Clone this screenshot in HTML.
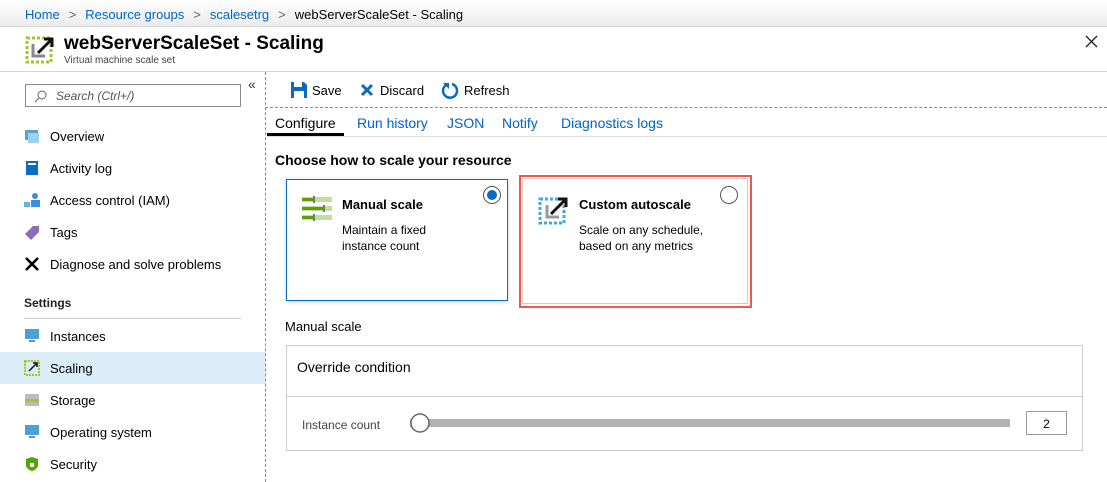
<!DOCTYPE html>
<html><head><style>
*{box-sizing:border-box;margin:0;padding:0}
body{width:1107px;height:482px;overflow:hidden;background:#fff;font-family:"Liberation Sans",sans-serif;color:#000;position:relative;font-size:13px}
.a{position:absolute}
.blue{color:#0063c9}
.crumb{top:0;left:0;width:1107px;height:27px;background:linear-gradient(#fff,#ececec);border-bottom:1px solid #d6d6d6}
.side div.i{position:absolute;left:50px;font-size:13px}
.ic{position:absolute;left:24px;width:16px;height:16px}
</style></head><body>
<div class="a crumb"></div>
<div class="a" style="top:7px;left:25px;font-size:13px"><span class="blue">Home</span><span style="color:#666;margin:0 9px">&gt;</span><span class="blue">Resource groups</span><span style="color:#666;margin:0 9px">&gt;</span><span class="blue">scalesetrg</span><span style="color:#666;margin:0 9px">&gt;</span>webServerScaleSet - Scaling</div>
<svg class="a" style="left:25px;top:34px" width="30" height="30"><rect x="2" y="4" width="24" height="24" fill="none" stroke="#a4c628" stroke-width="3" stroke-dasharray="3 2"/><path d="M8 10v12h12" fill="none" stroke="#888" stroke-width="3"/><path d="M13 19L26 6M19 5h8v8" fill="none" stroke="#111" stroke-width="3"/></svg>
<div class="a" style="left:64px;top:33px;font-size:19px;font-weight:bold">webServerScaleSet - Scaling</div>
<div class="a" style="left:64px;top:55px;font-size:10px;color:#444">Virtual machine scale set</div>
<svg class="a" style="left:1085px;top:35px" width="13" height="13"><path d="M1 1L12 12M12 1L1 12" stroke="#222" stroke-width="1.3"/></svg>
<div class="a" style="top:71px;left:0;width:1107px;border-top:1px solid #d6d6d6"></div>
<div class="a" style="top:72px;left:265px;height:410px;border-left:1px dashed #2ea9df"></div>
<div class="a" style="top:76px;left:248px;font-size:14px;color:#333">«</div>
<div class="a" style="left:25px;top:84px;width:216px;height:23px;border:1px solid #8a8a8a;font-size:12px;font-style:italic;color:#555;padding:4px 0 0 30px">Search (Ctrl+/)<svg class="a" style="left:8px;top:5px" width="13" height="13"><circle cx="8" cy="5" r="4" fill="none" stroke="#666"/><path d="M5 8L1 12" stroke="#666"/></svg></div>
<div class="side">
<svg class="ic" style="top:128px"><rect x="1" y="2" width="13" height="10" fill="#5ea0c8"/><rect x="4" y="5" width="11" height="10" fill="#9bd0ee"/></svg><div class="i" style="top:129px">Overview</div>
<svg class="ic" style="top:160px"><rect x="2" y="1" width="12" height="14" fill="#0a69c3"/><rect x="4" y="3" width="8" height="2" fill="#fff"/></svg><div class="i" style="top:161px">Activity log</div>
<svg class="ic" style="top:192px"><circle cx="11" cy="4" r="3" fill="#3a8fd6"/><rect x="7" y="8" width="9" height="7" fill="#3a8fd6"/><rect x="0" y="10" width="6" height="5" fill="#5fb3e6"/></svg><div class="i" style="top:193px">Access control (IAM)</div>
<svg class="ic" style="top:224px"><path d="M1 10L9 2h6v6l-8 8z" fill="#8e6bbf"/></svg><div class="i" style="top:225px">Tags</div>
<svg class="ic" style="top:256px"><path d="M2 2L14 14M14 2L2 14" stroke="#000" stroke-width="2.5"/></svg><div class="i" style="top:257px">Diagnose and solve problems</div>
<div class="a" style="left:24px;top:296px;font-size:12px;font-weight:bold;color:#222">Settings</div>
<div class="a" style="left:24px;top:318px;width:217px;border-top:1px solid #ccc"></div>
<svg class="ic" style="top:328px"><rect x="1" y="1" width="14" height="10" fill="#4aa3d8"/><rect x="5" y="12" width="6" height="2" fill="#888"/></svg><div class="i" style="top:329px">Instances</div>
<div class="a" style="left:0;top:352px;width:265px;height:32px;background:#dcedfa"></div>
<svg class="ic" style="top:360px"><rect x="1" y="1" width="14" height="14" fill="none" stroke="#a4c628" stroke-width="2" stroke-dasharray="2 1"/><path d="M5 11L13 3M9 3h4v4" stroke="#111" fill="none" stroke-width="1.5"/></svg><div class="i" style="top:361px">Scaling</div>
<svg class="ic" style="top:392px"><rect x="1" y="2" width="14" height="12" fill="#bbb"/><rect x="1" y="7" width="14" height="3" fill="#a4c628"/></svg><div class="i" style="top:393px">Storage</div>
<svg class="ic" style="top:424px"><rect x="1" y="1" width="14" height="10" fill="#4aa3d8"/><rect x="5" y="12" width="6" height="2" fill="#888"/></svg><div class="i" style="top:425px">Operating system</div>
<svg class="ic" style="top:456px"><path d="M8 1l6 2v6c0 3-3 5-6 6-3-1-6-3-6-6V3z" fill="#57a300"/><rect x="6" y="7" width="4" height="4" fill="#fff"/></svg><div class="i" style="top:457px">Security</div>
</div>
<svg class="a" style="left:290px;top:81px" width="18" height="18"><path d="M1 1h13l3 3v13H1z" fill="#0a69c3"/><rect x="4" y="1" width="8" height="5" fill="#fff"/><rect x="4" y="10" width="10" height="7" fill="#fff"/></svg>
<div class="a" style="left:312px;top:83px">Save</div>
<svg class="a" style="left:360px;top:83px" width="14" height="14"><path d="M2 2L12 12M12 2L2 12" stroke="#0a69c3" stroke-width="3"/></svg>
<div class="a" style="left:380px;top:83px">Discard</div>
<svg class="a" style="left:441px;top:81px" width="18" height="18"><path d="M5 4A7 7 0 1 0 11 3" fill="none" stroke="#0a69c3" stroke-width="2.5"/><path d="M2 2h6v6z" fill="#0a69c3"/></svg>
<div class="a" style="left:464px;top:83px">Refresh</div>
<div class="a" style="top:107px;left:265px;width:842px;border-top:1px dashed #2ea9df"></div>
<div class="a" style="left:275px;top:115px;font-size:14px">Configure</div>
<div class="a" style="left:267px;top:133px;width:77px;height:3px;background:#000"></div>
<div class="a" style="left:267px;top:136px;width:840px;border-top:1px solid #ddd"></div>
<div class="a blue" style="left:357px;top:115px;font-size:14px">Run history</div>
<div class="a blue" style="left:447px;top:115px;font-size:14px">JSON</div>
<div class="a blue" style="left:502px;top:115px;font-size:14px">Notify</div>
<div class="a blue" style="left:561px;top:115px;font-size:14px">Diagnostics logs</div>
<div class="a" style="left:275px;top:152px;font-size:14px;font-weight:bold">Choose how to scale your resource</div>
<div class="a" style="left:286px;top:179px;width:222px;height:122px;border:1px solid #0a69c3;box-shadow:0 1px 4px rgba(0,0,0,.2)"></div>
<svg class="a" style="left:302px;top:195px" width="30" height="30"><g fill="#bfe09a"><rect y="2" width="30" height="5"/><rect y="11" width="30" height="5"/><rect y="20" width="30" height="5"/></g><g fill="#5aa000"><rect y="3" width="12" height="3"/><rect y="12" width="22" height="3"/><rect y="21" width="12" height="3"/></g><g fill="#777"><rect x="11" y="1" width="2" height="7"/><rect x="21" y="10" width="2" height="7"/><rect x="11" y="19" width="2" height="7"/></g></svg>
<div class="a" style="left:342px;top:197px;font-weight:bold">Manual scale</div>
<div class="a" style="left:342px;top:222px;font-size:12px;line-height:16px">Maintain a fixed<br>instance count</div>
<svg class="a" style="left:482px;top:185px" width="20" height="20"><circle cx="10" cy="10" r="8.5" fill="#fff" stroke="#555"/><circle cx="10" cy="10" r="5" fill="#0a69c3"/></svg>
<div class="a" style="left:519px;top:175px;width:233px;height:133px;border:2px solid #f0574c"></div>
<div class="a" style="left:522px;top:178px;width:226px;height:126px;border:1px solid #ccc"></div>
<svg class="a" style="left:538px;top:193px" width="32" height="32"><rect x="2" y="6" width="24" height="24" fill="none" stroke="#40a9dc" stroke-width="3" stroke-dasharray="3 2"/><path d="M9 12v12h12" fill="none" stroke="#999" stroke-width="3"/><path d="M13 21L27 7M20 6h8v8" fill="none" stroke="#111" stroke-width="3"/></svg>
<div class="a" style="left:579px;top:197px;font-weight:bold">Custom autoscale</div>
<div class="a" style="left:579px;top:222px;font-size:12px;line-height:16px">Scale on any schedule,<br>based on any metrics</div>
<svg class="a" style="left:719px;top:185px" width="20" height="20"><circle cx="10" cy="10" r="8.5" fill="#fff" stroke="#555"/></svg>
<div class="a" style="left:285px;top:319px">Manual scale</div>
<div class="a" style="left:286px;top:345px;width:797px;height:106px;border:1px solid #ccc"></div>
<div class="a" style="left:286px;top:396px;width:797px;border-top:1px solid #ccc"></div>
<div class="a" style="left:297px;top:359px;font-size:14px">Override condition</div>
<div class="a" style="left:302px;top:418px;font-size:12px;color:#444">Instance count</div>
<div class="a" style="left:410px;top:419px;width:600px;height:8px;background:#b3b3b3"></div>
<svg class="a" style="left:409px;top:412px" width="22" height="22"><circle cx="11" cy="11" r="9" fill="#fff" stroke="#666" stroke-width="1.5"/></svg>
<div class="a" style="left:1026px;top:411px;width:41px;height:24px;border:1px solid #999;text-align:center;padding-top:5px;font-size:12px">2</div>
</body></html>
